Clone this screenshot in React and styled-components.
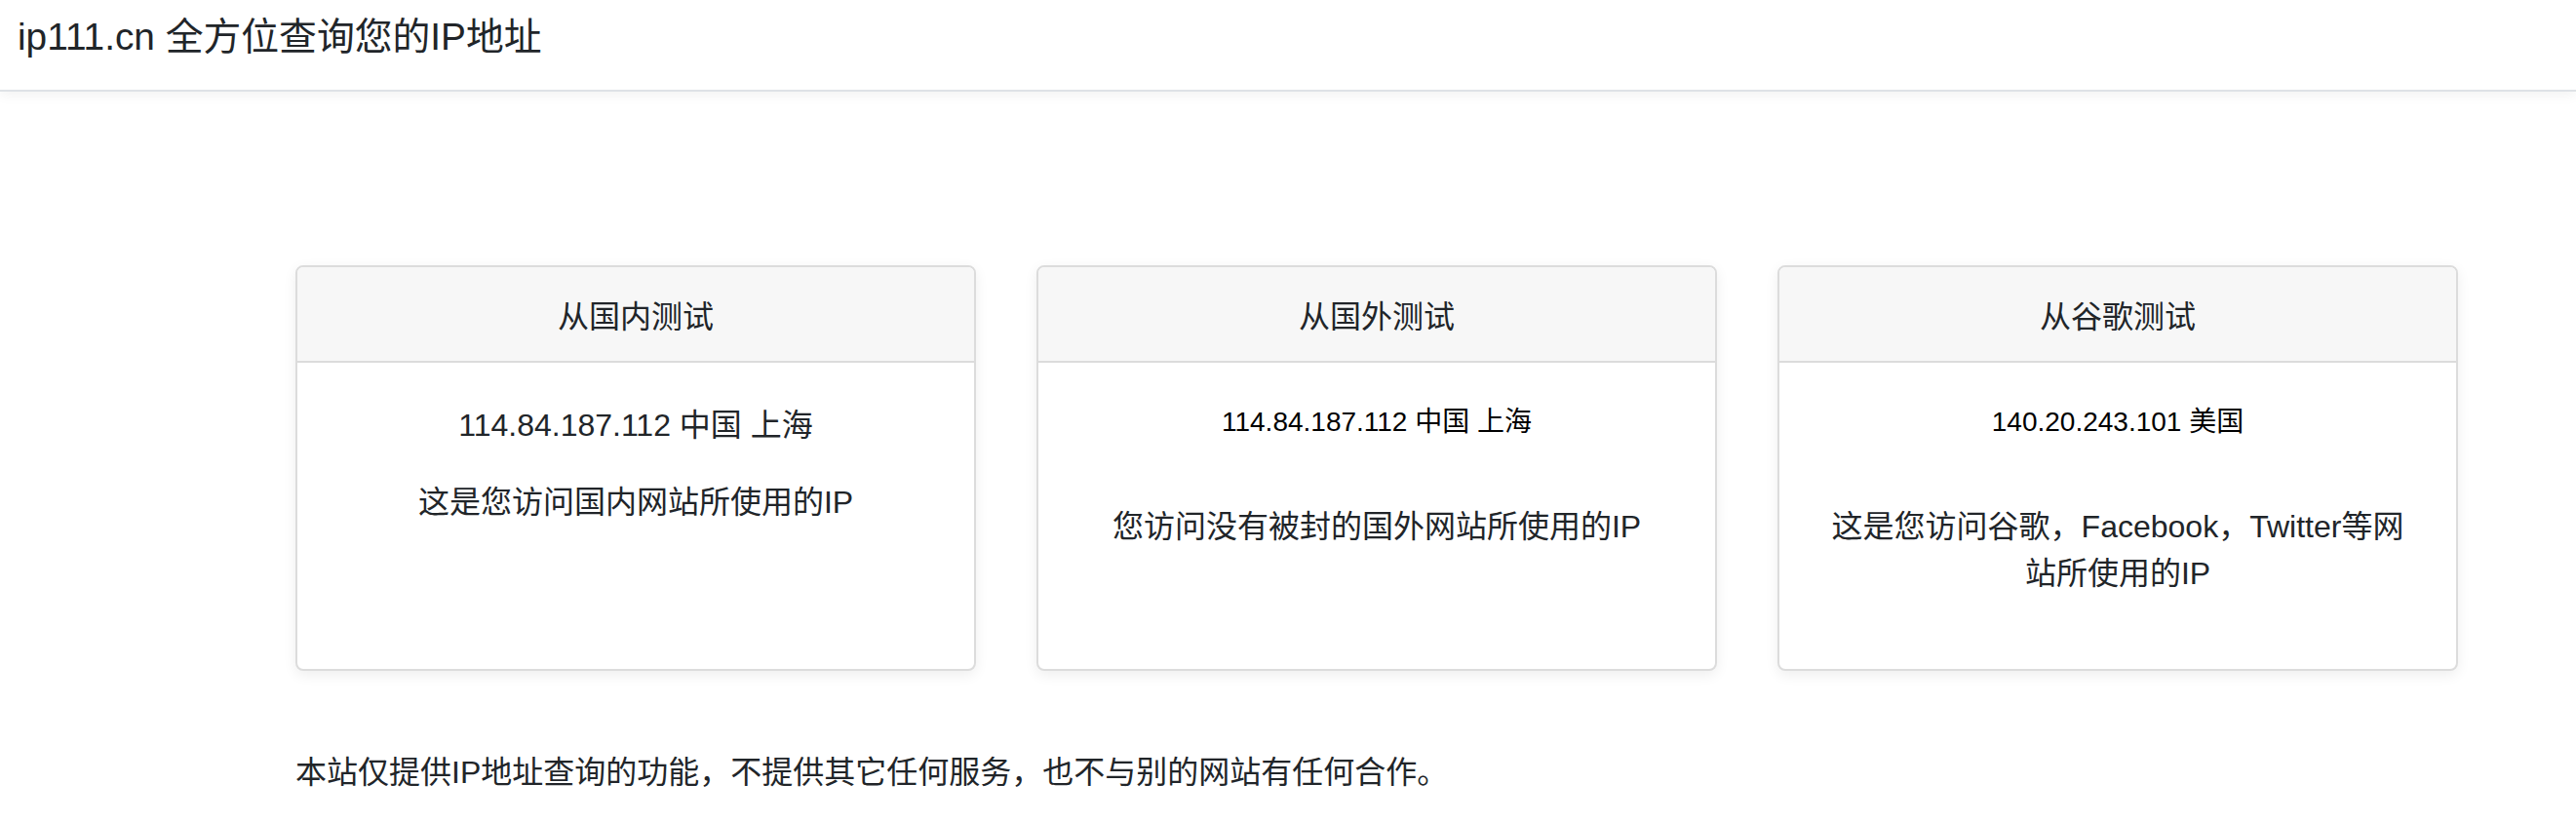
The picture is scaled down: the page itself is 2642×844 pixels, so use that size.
import React from "react";
import styled, { createGlobalStyle } from "styled-components";

const GlobalStyle = createGlobalStyle`
  html, body {
    margin: 0;
    padding: 0;
    background: #ffffff;
  }
  body {
    font-family: "Liberation Sans", "Noto Sans CJK SC", sans-serif;
    color: #212529;
  }
`;

const TopBar = styled.header`
  height: 94px;
  box-sizing: border-box;
  border-bottom: 2px solid #dee2e6;
  box-shadow: 0 4px 12px rgba(0, 0, 0, 0.05);
  display: flex;
  align-items: flex-start;
  padding: 9px 18px 0;
`;

const Title = styled.h1`
  margin: 0;
  font-size: 38.8px;
  line-height: 58px;
  font-weight: 400;
  color: #212529;
`;

const Main = styled.main`
  margin: 178px 0 0 303px;
  width: 2218px;
`;

const CardGrid = styled.div`
  display: grid;
  grid-template-columns: repeat(3, 1fr);
  column-gap: 62px;
  align-items: stretch;
`;

const Card = styled.section`
  border: 2px solid #dcdcdc;
  border-radius: 8px;
  background: #fff;
  box-shadow: 0 4px 14px rgba(0, 0, 0, 0.07);
  display: flex;
  flex-direction: column;
  overflow: hidden;
`;

const CardHeader = styled.div`
  height: 96px;
  background: #f7f7f7;
  border-bottom: 2px solid #dcdcdc;
  display: flex;
  align-items: center;
  justify-content: center;
  font-size: 32px;
  color: #212529;
`;

const CardBody = styled.div`
  flex: 1;
  padding: 40px 40px 74px;
  text-align: center;
`;

const IpLine = styled.div`
  font-size: ${(p) => (p.$large ? "32px" : "28px")};
  line-height: ${(p) => (p.$large ? "48px" : "42px")};
  margin-bottom: ${(p) => (p.$large ? "31px" : "62px")};
  color: ${(p) => (p.$large ? "#212529" : "#000")};
  white-space: nowrap;
`;

const Desc = styled.p`
  margin: 0;
  font-size: 32px;
  line-height: 48px;
  color: #212529;
`;

const Footer = styled.p`
  margin: 80px 0 0;
  font-size: 32px;
  line-height: 48px;
  color: #212529;
`;

const cards = [
  {
    title: "从国内测试",
    ip: "114.84.187.112 中国 上海",
    desc: "这是您访问国内网站所使用的IP",
    large: true,
  },
  {
    title: "从国外测试",
    ip: "114.84.187.112 中国 上海",
    desc: "您访问没有被封的国外网站所使用的IP",
    large: false,
  },
  {
    title: "从谷歌测试",
    ip: "140.20.243.101 美国",
    desc: "这是您访问谷歌，Facebook，Twitter等网站所使用的IP",
    large: false,
  },
];

export default function App() {
  return (
    <>
      <GlobalStyle />
      <TopBar>
        <Title>ip111.cn 全方位查询您的IP地址</Title>
      </TopBar>
      <Main>
        <CardGrid>
          {cards.map((c) => (
            <Card key={c.title}>
              <CardHeader>{c.title}</CardHeader>
              <CardBody>
                <IpLine $large={c.large}>{c.ip}</IpLine>
                <Desc>{c.desc}</Desc>
              </CardBody>
            </Card>
          ))}
        </CardGrid>
        <Footer>
          本站仅提供IP地址查询的功能，不提供其它任何服务，也不与别的网站有任何合作。
        </Footer>
      </Main>
    </>
  );
}
